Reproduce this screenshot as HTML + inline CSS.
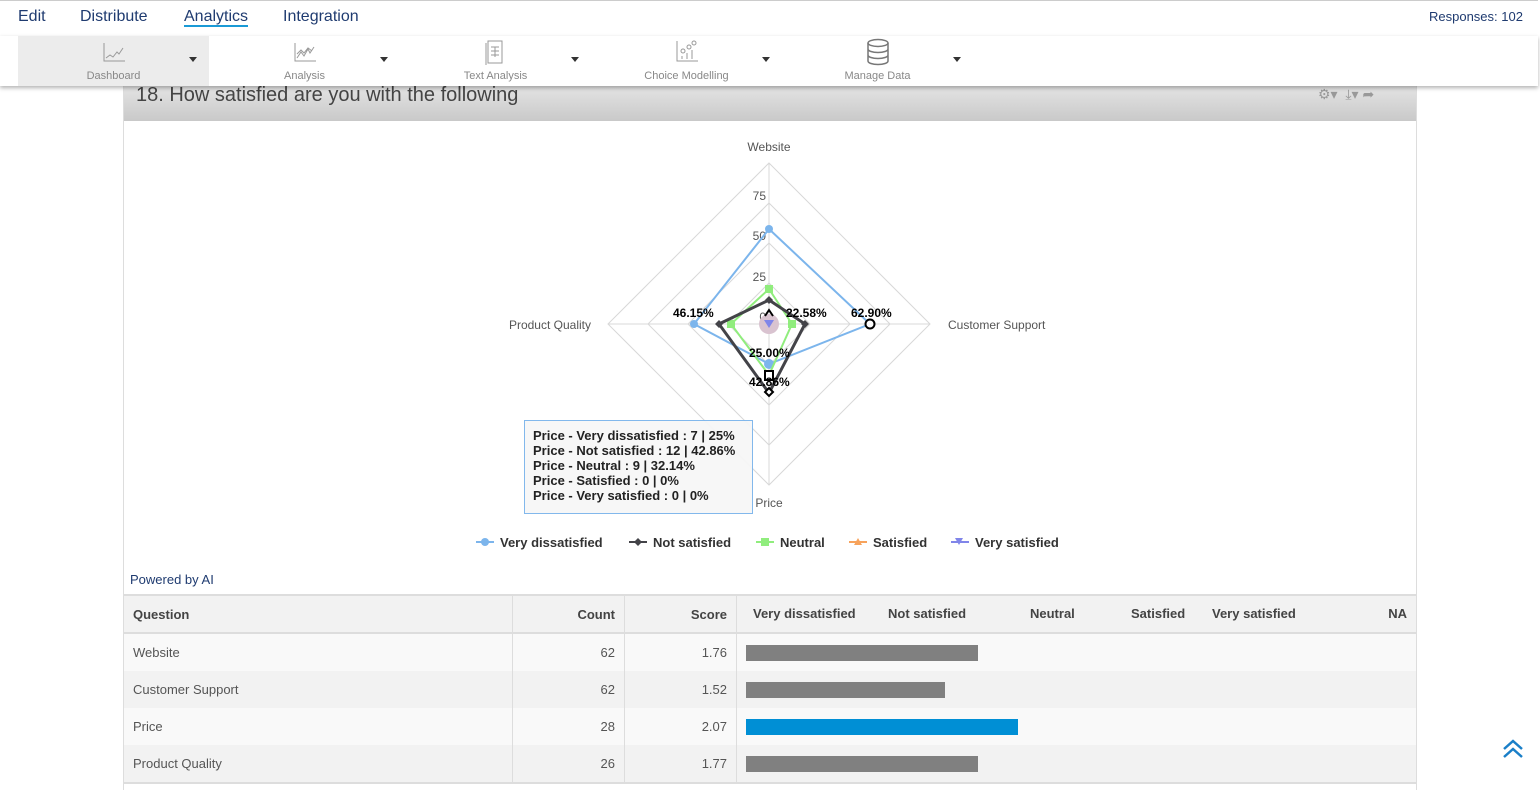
<!DOCTYPE html>
<html><head><style>
body{margin:0;width:1540px;height:790px;overflow:hidden;background:#fff;font-family:"Liberation Sans",sans-serif;position:relative}
.nav{position:absolute;left:0;top:0;width:1538px;height:35px;border-bottom:1px solid #ddd;border-top:1px solid #ccc;background:#fff;z-index:3}
.nav span{position:absolute;top:7px;font-size:16px;color:#1f3b70}
.tb{position:absolute;left:0;top:36px;width:1538px;height:50px;background:#fff;box-shadow:0 2px 4px rgba(0,0,0,.3);z-index:3}
.ti{position:absolute;top:0;height:50px;width:191px}
.ti .l{position:absolute;bottom:4px;width:191px;text-align:center;font-size:11px;color:#888;left:0}
.ti .a{position:absolute;right:12px;top:21px;width:0;height:0;border-left:4px solid transparent;border-right:4px solid transparent;border-top:5px solid #333}
.panel{position:absolute;left:123px;top:80px;width:1292px;height:710px;border-left:1px solid #ddd;border-right:1px solid #ddd}
.hd{position:absolute;left:0;top:0;width:1292px;height:41px;background:linear-gradient(#e8e8e8,#c9c9c9)}
.hd .t{position:absolute;left:12px;top:4px;font-size:20px;color:#444}
table{position:absolute;left:0;top:514px;width:1292px;border-collapse:collapse;font-size:13px;color:#555}
td,th{height:37px;padding:0 9px;border-right:1px solid #ddd}
th{background:#f2f2f2;color:#444;text-align:left;border-top:2px solid #ddd;border-bottom:2px solid #ddd;height:36px}
tr:nth-child(odd) td{background:#f2f2f2}
tr:nth-child(even) td{background:#f9f9f9}
.r{text-align:right}
.bar{height:16px;background:#808080}
.hl{position:absolute;top:10px}
</style></head><body>
<div class="nav">
<span style="left:18px">Edit</span><span style="left:80px">Distribute</span>
<span style="left:184px;border-bottom:2px solid #1a9ad6;line-height:17px">Analytics</span><span style="left:283px">Integration</span>
<span style="left:1429px;font-size:13px;top:8px">Responses: 102</span>
</div>
<div class="tb">
<div class="ti" style="left:18px;background:#ececec"><svg style="position:absolute;left:84px;top:5px" width="24" height="22" fill="none" stroke="#999"><path d="M2 2V20H23M4 17l4-3 3 2 4-5 2 2 4-6"/></svg><div class="l">Dashboard</div><div class="a"></div></div>
<div class="ti" style="left:209px"><svg style="position:absolute;left:84px;top:5px" width="24" height="22" fill="none" stroke="#999"><path d="M2 2V20H23M4 17l4-6 3 4 4-7 2 4 4-6M4 13l4-4 3 3 4-5 4 3"/></svg><div class="l">Analysis</div><div class="a"></div></div>
<div class="ti" style="left:400px"><svg style="position:absolute;left:84px;top:3px" width="22" height="26" fill="none" stroke="#999"><rect x="4" y="2" width="14" height="22"/><path d="M7 8h8M7 12h8M7 16h8M11 8v10M2 4v22"/></svg><div class="l">Text Analysis</div><div class="a"></div></div>
<div class="ti" style="left:591px"><svg style="position:absolute;left:84px;top:3px" width="24" height="24" fill="none" stroke="#999"><path d="M2 2V22H23M7 20v-3M12 20v-6M17 20v-9"/><circle cx="8" cy="12" r="2"/><circle cx="14" cy="8" r="2"/><circle cx="19" cy="4" r="2"/></svg><div class="l">Choice Modelling</div><div class="a"></div></div>
<div class="ti" style="left:782px"><svg style="position:absolute;left:84px;top:2px" width="24" height="28" fill="none" stroke="#777" stroke-width="1.5"><ellipse cx="12" cy="5" rx="10" ry="3.5"/><path d="M2 5v18c0 2 4.5 3.5 10 3.5s10-1.5 10-3.5V5M2 11c0 2 4.5 3.5 10 3.5s10-1.5 10-3.5M2 17c0 2 4.5 3.5 10 3.5s10-1.5 10-3.5"/></svg><div class="l">Manage Data</div><div class="a"></div></div>
</div>
<div class="panel">
<div class="hd"><div class="t">18. How satisfied are you with the following</div>
<div style="position:absolute;left:1194px;top:6px;color:#999;font-size:14px">⚙▾ &nbsp;⤓▾ ➦</div></div>
<div style="position:absolute;left:6px;top:492px;font-size:13px;color:#1f3b70">Powered by AI</div>
<table>
<tr><th style="width:370px">Question</th><th class="r" style="width:93px">Count</th><th class="r" style="width:93px">Score</th>
<th style="border-right:0;padding:0;position:relative"><span class="hl" style="left:16px">Very dissatisfied</span><span class="hl" style="left:151px">Not satisfied</span><span class="hl" style="left:293px">Neutral</span><span class="hl" style="left:394px">Satisfied</span><span class="hl" style="left:475px">Very satisfied</span><span class="hl" style="right:9px">NA</span></th></tr>
<tr><td>Website</td><td class="r">62</td><td class="r">1.76</td><td style="border:0"><div class="bar" style="width:232px"></div></td></tr>
<tr><td>Customer Support</td><td class="r">62</td><td class="r">1.52</td><td style="border:0"><div class="bar" style="width:199px"></div></td></tr>
<tr><td>Price</td><td class="r">28</td><td class="r">2.07</td><td style="border:0"><div class="bar" style="width:272px;background:#008fd5"></div></td></tr>
<tr><td style="border-bottom:2px solid #ddd">Product Quality</td><td class="r" style="border-bottom:2px solid #ddd">26</td><td class="r" style="border-bottom:2px solid #ddd">1.77</td><td style="border:0;border-bottom:2px solid #ddd"><div class="bar" style="width:232px"></div></td></tr>
</table>
</div>
<svg style="position:absolute;left:0;top:0;z-index:1" width="1540" height="790" font-family="Liberation Sans,sans-serif">
<g fill="none" stroke="#d8d8d8">
<path d="M769 163L930 324 769 485 608 324Z"/><path d="M769 203L890 324 769 445 648 324Z"/><path d="M769 243L850 324 769 405 688 324Z"/><path d="M769 283L810 324 769 365 728 324Z"/>
<path d="M769 163V485M608 324H930"/></g>
<g font-size="12" fill="#555"><text x="769" y="151" text-anchor="middle">Website</text><text x="948" y="329">Customer Support</text><text x="591" y="329" text-anchor="end">Product Quality</text><text x="769" y="507" text-anchor="middle">Price</text>
<text x="766" y="200" text-anchor="end">75</text><text x="766" y="240" text-anchor="end">50</text><text x="766" y="281" text-anchor="end">25</text><text x="766" y="321" text-anchor="end">0</text></g>
<circle cx="769" cy="324" r="10" fill="#d9c3d0"/>
<path d="M769 229L870 324 769 364 694 324Z" fill="none" stroke="#7cb5ec" stroke-width="2"/>
<g fill="#7cb5ec"><circle cx="769" cy="229" r="4"/><circle cx="694" cy="324" r="4"/><circle cx="769" cy="364" r="5"/></g>
<path d="M769 289L792 324 769 375 731 324Z" fill="none" stroke="#90ed7d" stroke-width="2"/>
<g fill="#90ed7d"><rect x="765" y="285" width="8" height="8"/><rect x="788" y="320" width="8" height="8"/><rect x="727" y="320" width="8" height="8"/></g>
<path d="M769 300L805 324 769 393 719 324Z" fill="none" stroke="#434348" stroke-width="3"/>
<g fill="#434348"><path d="M769 296l4 4-4 4-4-4z M805 320l4 4-4 4-4-4z M719 320l4 4-4 4-4-4z"/></g>
<circle cx="870" cy="324" r="4.5" fill="#fff" stroke="#000" stroke-width="2"/>
<rect x="765" y="371" width="8" height="9" fill="#fff" stroke="#000" stroke-width="2"/>
<path d="M769 388l4 4-4 4-4-4z" fill="#fff" stroke="#000" stroke-width="2"/>
<path d="M765 316l4-6 4 6" fill="none" stroke="#000" stroke-width="2"/>
<path d="M764 320h10l-5 8z" fill="#8085e9"/>
<g font-size="12" font-weight="bold" fill="#000"><text x="673" y="317">46.15%</text><text x="786" y="317">22.58%</text><text x="851" y="317">62.90%</text><text x="749" y="357">25.00%</text><text x="749" y="386">42.86%</text></g>
<rect x="524.5" y="420.5" width="228" height="93" fill="#f7f7f7" stroke="#7cb5ec" opacity=".95"/>
<g font-size="13" font-weight="bold" fill="#222"><text x="533" y="440">Price - Very dissatisfied : 7 | 25%</text><text x="533" y="455">Price - Not satisfied : 12 | 42.86%</text><text x="533" y="470">Price - Neutral : 9 | 32.14%</text><text x="533" y="485">Price - Satisfied : 0 | 0%</text><text x="533" y="500">Price - Very satisfied : 0 | 0%</text></g>
<g font-size="13" font-weight="bold" fill="#333">
<path d="M476 542h18" stroke="#7cb5ec" stroke-width="2"/><circle cx="485" cy="542" r="4" fill="#7cb5ec"/><text x="500" y="547">Very dissatisfied</text>
<path d="M629 542h18" stroke="#434348" stroke-width="2"/><path d="M638 538l4 4-4 4-4-4z" fill="#434348"/><text x="653" y="547">Not satisfied</text>
<path d="M756 542h18" stroke="#90ed7d" stroke-width="2"/><rect x="761" y="538" width="8" height="8" fill="#90ed7d"/><text x="780" y="547">Neutral</text>
<path d="M849 542h18" stroke="#f7a35c" stroke-width="2"/><path d="M858 538l4 7h-8z" fill="#f7a35c"/><text x="873" y="547">Satisfied</text>
<path d="M951 542h18" stroke="#8085e9" stroke-width="2"/><path d="M955 538h8l-4 7z" fill="#8085e9"/><text x="975" y="547">Very satisfied</text></g>
</svg>
<svg style="position:absolute;left:1502px;top:739px" width="22" height="20" fill="none" stroke="#1a7fc8" stroke-width="2.5"><path d="M2 10l9-8 9 8M2 18l9-8 9 8"/></svg>
</body></html>
